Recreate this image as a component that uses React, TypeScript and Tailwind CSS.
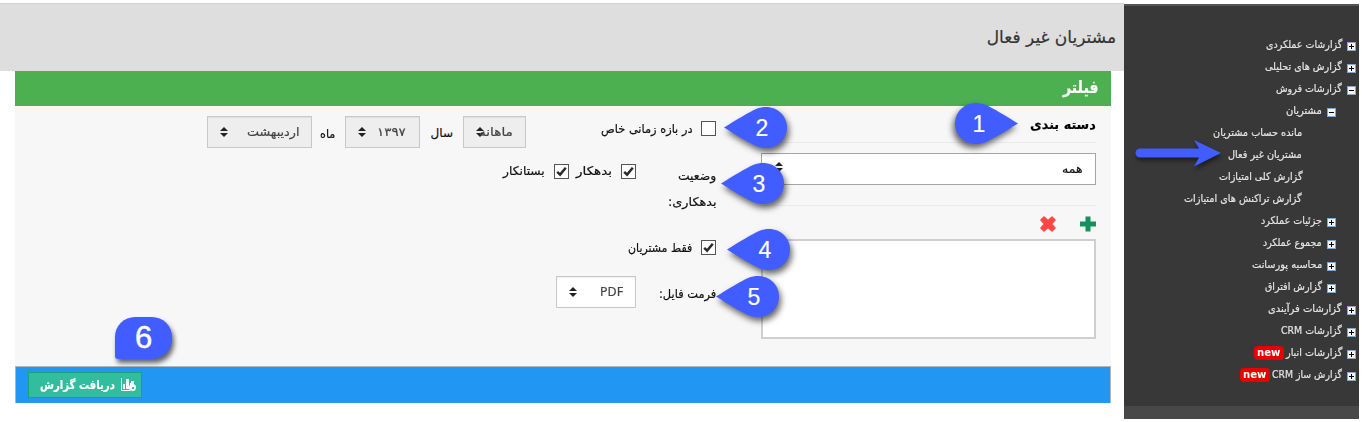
import { useLayoutEffect, useRef, useState } from "react";
import type { ReactNode } from "react";

/* Single-line label whose glyphs are condensed or widened to a given width. */
function Fit({ w, className = "", children }: { w: number; className?: string; children: ReactNode }) {
  const ref = useRef<HTMLSpanElement>(null);
  const [scale, setScale] = useState(1);
  useLayoutEffect(() => {
    if (ref.current) setScale(w / ref.current.offsetWidth);
  }, [w]);
  return (
    <span className={`flex shrink-0 whitespace-nowrap ${className}`} style={{ width: w }}>
      <span ref={ref} className="shrink-0 origin-right" style={{ transform: `scaleX(${scale})` }}>
        {children}
      </span>
    </span>
  );
}

type Item = { text: string; w: number; level: 0 | 1 | 2; open?: boolean; badge?: boolean };

const items: Item[] = [
  { text: "گزارشات عملکردی", w: 76, level: 0 },
  { text: "گزارش های تحلیلی", w: 77, level: 0 },
  { text: "گزارشات فروش", w: 66, level: 0, open: true },
  { text: "مشتریان", w: 36, level: 1, open: true },
  { text: "مانده حساب مشتریان", w: 89, level: 2 },
  { text: "مشتریان غیر فعال", w: 74, level: 2 },
  { text: "گزارش کلی امتیازات", w: 83, level: 2 },
  { text: "گزارش تراکنش های امتیازات", w: 118, level: 2 },
  { text: "جزئیات عملکرد", w: 61, level: 1 },
  { text: "مجموع عملکرد", w: 59, level: 1 },
  { text: "محاسبه پورسانت", w: 70, level: 1 },
  { text: "گزارش افتراق", w: 57, level: 1 },
  { text: "گزارشات فرآیندی", w: 74, level: 0 },
  { text: "گزارشات CRM", w: 61, level: 0 },
  { text: "گزارشات انبار", w: 56, level: 0, badge: true },
  { text: "گزارش ساز CRM", w: 70, level: 0, badge: true },
];

const indent = { 0: "pr-[3px]", 1: "pr-[23px]", 2: "pr-[57px]" };

function TreeIcon({ open }: { open?: boolean }) {
  return (
    <svg width="9" height="9" viewBox="0 0 9 9" className="mt-[3px] ml-[5px] shrink-0" shapeRendering="crispEdges">
      <rect width="9" height="9" fill="#7ba7d0" />
      <rect x="1" y="1" width="7" height="7" fill="#f5f4ef" />
      <path d="M2 4h5v1H2z" fill="#000" />
      {!open && <path d="M4 2h1v5H4z" fill="#000" />}
    </svg>
  );
}

function Check({ on = true }: { on?: boolean }) {
  return (
    <span className="flex size-[15px] shrink-0 items-center justify-center border border-[#555] bg-white">
      {on && (
        <svg width="11" height="11" viewBox="0 0 11 11" fill="none" stroke="#2b2b2b" strokeWidth="2.5">
          <path d="M1.200 5.800 4.100 8.600 9.800 1.800" />
        </svg>
      )}
    </span>
  );
}

function Sort({ className = "" }: { className?: string }) {
  return (
    <svg width="8" height="10" viewBox="0 0 8 10" fill="#222" className={`shrink-0 ${className}`}>
      <path d="M0 4 4 0l4 4zM0 6h8L4 10z" />
    </svg>
  );
}

function Pin({ n, flip, className }: { n: string; flip?: boolean; className: string }) {
  return (
    <div className={`absolute h-[41px] w-[63px] ${className}`}>
      <svg
        width="63"
        height="41"
        viewBox="0 0 63 41"
        className={`absolute inset-0 overflow-visible drop-shadow-[2px_4px_3px_rgba(0,0,0,0.6)] ${flip ? "-scale-x-100" : ""}`}
      >
        <path d="M0 20.5C12 13 26 4.500 32 2C36 .5 39 0 42 0C54 0 63 9.200 63 20.500S54 41 42 41C39 41 36 40.500 32 39C26 36.500 12 28 0 20.500Z" fill="#425dff" />
      </svg>
      <span
        className={`absolute top-0 flex h-[43px] w-[42px] items-center justify-center font-['Liberation_Sans'] text-[23px] text-white ${flip ? "left-[3px]" : "left-[17px]"}`}
      >
        {n}
      </span>
    </div>
  );
}

const selectBox = "flex h-[32px] shrink-0 items-center border border-[#c8c8c8] text-[#444] shadow-[inset_0_1px_1px_rgba(0,0,0,0.06)]";

export default function App() {
  return (
    <div dir="rtl" className="relative flex h-[422px] w-[1362px] overflow-hidden bg-white font-['DejaVu_Sans',sans-serif] text-[12px] text-[#111] [-webkit-text-stroke:0.2px_currentColor]">
      <aside className="mt-[4px] mr-[3px] flex h-[415px] w-[235px] shrink-0 flex-col bg-[#383838] text-[10.500px] text-[#e4e4e4]">
        <div className="h-[2px] bg-[#555]" />
        <ul className="flex flex-1 flex-col pt-[28px]">
          {items.map((it) => (
            <li key={it.text} className={`flex h-[22px] shrink-0 items-center ${indent[it.level]}`}>
              {it.level < 2 && <TreeIcon open={it.open} />}
              <Fit w={it.w}>{it.text}</Fit>
              {it.badge && (
                <span className="mr-[2px] flex h-[14px] w-[30px] items-center justify-center rounded-[4px] bg-[#e60000] text-[11px] font-bold text-white [-webkit-text-stroke:0]">
                  <Fit w={23}>new</Fit>
                </span>
              )}
            </li>
          ))}
        </ul>
        <div className="h-[13px] bg-[#484848]" />
      </aside>

      <main className="flex w-[1124px] shrink-0 flex-col pt-[3px]">
        <header className="flex h-[68px] items-center border-t border-[#d3d3d3] bg-[#dedede] pr-[8px] text-[17px] text-[#333]">
          <Fit w={129}>مشتریان غیر فعال</Fit>
        </header>
        <section className="mr-[13px] ml-[15px] flex flex-col">
          <div className="flex h-[35px] items-center bg-[#4caf50] pr-[12px] pb-[2px] text-[17px] font-bold text-white">
            <Fit w={36}>فیلتر</Fit>
          </div>
          <div className="flex h-[260px] bg-[#f7f7f7] pr-[15px]">
            <div className="flex w-[335px] shrink-0 flex-col">
              <div className="flex h-[37px] items-center border-b border-[#ebebeb] pt-px text-[13px] font-bold text-black">
                <Fit w={66}>دسته بندی</Fit>
              </div>
              <div className="mt-[10px] flex h-[32px] items-center justify-between border border-[#a5a5a5] bg-white pr-[12px] pl-[13px]">
                <Fit w={21}>همه</Fit>
                <Sort className="mb-1" />
              </div>
              <div className="mt-[20px] flex h-[34px] items-center gap-[24px] border-t border-[#ebebeb] pt-[3px]">
                <svg width="16" height="16" viewBox="0 0 16 16" fill="#159160">
                  <path d="M5.500 .5h5v5H16v5h-5.500v5h-5v-5H0v-5h5.500z" />
                </svg>
                <svg width="16" height="16" viewBox="0 0 16 16" fill="#ff4845">
                  <path d="M4 1 8 4.500 12 1l3 3-3.500 4 3.500 4-3 3-4-3.500L4 15l-3-3 3.500-4L1 4z" stroke="#ff4845" strokeWidth="1.500" strokeLinejoin="round" />
                </svg>
              </div>
              <div className="h-[100px] border-2 border-[#cfcfcf] bg-white" />
            </div>

            <div className="mr-[45px] flex flex-1 flex-col">
              <div className="flex h-[52px] items-center">
                <span className="mb-[7px] flex items-center">
                  <Check on={false} />
                  <Fit w={91} className="mr-[9px]">در بازه زمانی خاص</Fit>
                </span>
                <div className={`${selectBox} mr-[75px] w-[63px] bg-[#eee] pr-[12px]`}>
                  <Fit w={34}>ماهانه</Fit>
                  <Sort className="-mr-[5px]" />
                </div>
                <Fit w={22} className="mr-[10px] pt-[2px]">سال</Fit>
                <div className={`${selectBox} mr-[11px] w-[75px] justify-between bg-[#eee] pr-[13px] pl-[12px]`}>
                  <Fit w={29}>۱۳۹۷</Fit>
                  <Sort />
                </div>
                <Fit w={15} className="mr-[10px] pt-[3px]">ماه</Fit>
                <div className={`${selectBox} mr-[8px] w-[105px] justify-between bg-[#eee] pr-[12px] pl-[12px]`}>
                  <Fit w={52}>اردیبهشت</Fit>
                  <Sort />
                </div>
              </div>
              <div className="flex h-[64px]">
                <div className="flex w-[80px] flex-col pt-[5px] leading-[26px]">
                  <Fit w={38}>وضعیت</Fit>
                  <Fit w={48}>بدهکاری:</Fit>
                </div>
                <div className="flex h-[26px] items-center">
                  <Check />
                  <Fit w={36} className="mr-[9px]">بدهکار</Fit>
                  <span className="w-[7px]" />
                  <Check />
                  <Fit w={42} className="mr-[9px]">بستانکار</Fit>
                </div>
              </div>
              <div className="flex h-[52px] items-center pb-px">
                <Check />
                <Fit w={64} className="mr-[9px]">فقط مشتریان</Fit>
              </div>
              <div className="flex h-[36px] items-center">
                <div className="w-[80px] pt-[4px]">
                  <Fit w={57}>فرمت فایل:</Fit>
                </div>
                <div className={`${selectBox} w-[80px] justify-between bg-white pr-[12px] pl-[12px]`}>
                  <Fit w={23} className="font-['Noto_Sans'] text-[13px]">PDF</Fit>
                  <Sort />
                </div>
              </div>
            </div>
          </div>
          <footer className="flex h-[37px] items-center justify-end border-x border-t border-[#b5b5b5] bg-[#2196f3] pl-[12px]">
            <button className="flex h-[26px] w-[114px] items-center border border-[#229c83] bg-[#32bd9e] pr-[5px] text-[12px] font-bold text-white">
              <svg width="15" height="14" viewBox="0 0 15 14" fill="white" className="shrink-0">
                <path d="M0 0h1v12h8v1H0zM2 6h2v5H2zM5 1h3v10H5zM9 5h2v2H9zM10 3h3v3h-3z" />
                <path fillRule="evenodd" d="M11.500 6a3.500 3.500 0 1 1 0 7 3.500 3.500 0 0 1 0-7m-.5 3v2h2V9z" />
              </svg>
              <Fit w={75} className="mr-[6px]">دریافت گزارش</Fit>
            </button>
          </footer>
        </section>
      </main>

      <Pin n="1" flip className="top-[103px] left-[955px]" />
      <Pin n="2" className="top-[107px] left-[724px]" />
      <Pin n="3" className="top-[163px] left-[721px]" />
      <Pin n="4" className="top-[229px] left-[727px]" />
      <Pin n="5" className="top-[276px] left-[716px]" />
      <div className="absolute top-[317px] left-[115px] flex h-[42px] w-[57px] items-center justify-center rounded-[20px] rounded-bl-[3px] bg-[#425dff] font-['Liberation_Sans'] text-[31px] text-white shadow-[2px_4px_5px_rgba(0,0,0,0.6)] [-webkit-text-stroke:0.5px_white]">
        6
      </div>
      <svg
        width="86"
        height="28"
        viewBox="0 0 86 28"
        className="absolute top-[139px] left-[1135px] overflow-visible drop-shadow-[1px_3px_2px_rgba(0,0,0,0.5)]"
      >
        <path d="M5 9.500H64L59 1 86 14 59 27.500 64 18.500H5a4.500 4.500 0 0 1 0-9z" fill="#425dff" />
      </svg>
    </div>
  );
}
